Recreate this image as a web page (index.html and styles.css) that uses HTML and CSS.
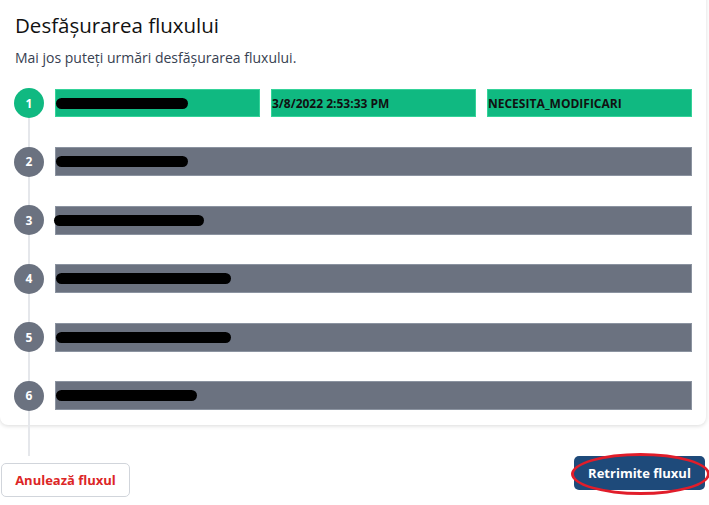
FILE: index.html
```html
<!DOCTYPE html>
<html>

<head>
    <title>Desfășurarea fluxului</title>
    <meta charset="utf-8">
    <meta name="viewport" content="width=device-width, initial-scale=1.0">

    <link rel="stylesheet" href="styles.css">
</head>

<body>

    <section class="card">
        <h1>Desfășurarea fluxului</h1>
        <p class="intro">Mai jos puteți urmări desfășurarea fluxului.</p>

        <ol class="pasi">
            <li class="pas activ">
                <span class="cerc">1</span>
                <div class="celule">
                    <div class="celula"><span class="ascuns lat1"></span></div>
                    <div class="celula">3/8/2022 2:53:33 PM</div>
                    <div class="celula">NECESITA_MODIFICARI</div>
                </div>
            </li>
            <li class="pas">
                <span class="cerc">2</span>
                <div class="bara"><span class="ascuns lat1"></span></div>
            </li>
            <li class="pas">
                <span class="cerc">3</span>
                <div class="bara"><span class="ascuns lat3"></span></div>
            </li>
            <li class="pas">
                <span class="cerc">4</span>
                <div class="bara"><span class="ascuns lat4"></span></div>
            </li>
            <li class="pas">
                <span class="cerc">5</span>
                <div class="bara"><span class="ascuns lat4"></span></div>
            </li>
            <li class="pas ultim">
                <span class="cerc">6</span>
                <div class="bara"><span class="ascuns lat6"></span></div>
            </li>
        </ol>
    </section>

    <div class="actiuni">
        <button class="btn anuleaza">Anulează fluxul</button>
        <button class="btn retrimite">Retrimite fluxul<span class="marcaj"></span></button>
    </div>

</body>

</html>
```

FILE: styles.css
```css
body {
    margin: 0;
    background-color: #fff;
    font-family: "Open Sans", sans-serif;
    color: #111827;
}

.card {
    width: 706px;
    box-sizing: border-box;
    margin-top: -10px;
    padding: 10px 14px 14px 14px;
    background-color: #fff;
    border-radius: 8px;
    box-shadow: 0 1px 4px rgba(0, 0, 0, 0.15);
}

h1 {
    margin: 10px 0 0 1px;
    font-size: 20.5px;
    font-weight: 400;
    line-height: 30px;
    color: #111;
}

.intro {
    margin: 8px 0 0 1px;
    font-size: 14px;
    line-height: 19px;
    color: #374151;
}

.pasi {
    list-style: none;
    margin: 21px 0 0 0;
    padding: 0;
    display: flex;
    flex-direction: column;
    gap: 28.6px;
}

.pas {
    display: flex;
    align-items: center;
    gap: 11px;
    height: 30px;
    position: relative;
}

.cerc {
    width: 30px;
    height: 30px;
    flex: none;
    border-radius: 50%;
    background-color: #6b7280;
    color: #fff;
    font-size: 12px;
    font-weight: 700;
    display: flex;
    align-items: center;
    justify-content: center;
    position: relative;
    z-index: 2;
}

.activ .cerc {
    background-color: #10b981;
}

/* linia dintre cercuri */
.pas::after {
    content: "";
    position: absolute;
    left: 14px;
    top: 30px;
    width: 2px;
    height: 29px;
    background-color: #e5e7eb;
    z-index: 2;
}

.ultim::after {
    height: 45px;
}

.celule {
    flex: 1;
    display: grid;
    grid-template-columns: repeat(3, 1fr);
    gap: 11px;
}

.celula {
    height: 28px;
    background-color: #10b981;
    border: 1px solid #34d399;
    box-sizing: border-box;
    font-size: 12px;
    font-weight: 700;
    color: #111;
    display: flex;
    align-items: center;
}

.bara {
    flex: 1;
    height: 29px;
    background-color: #6b7280;
    border: 1px solid #8b93a0;
    box-sizing: border-box;
    display: flex;
    align-items: center;
}

.ascuns {
    height: 11px;
    border-radius: 6px;
    background-color: #000;
}

.lat1 {
    width: 132px;
}

.lat3 {
    width: 150px;
    margin-left: -2px;
}

.lat4 {
    width: 175px;
}

.lat6 {
    width: 141px;
}

.actiuni {
    display: flex;
    justify-content: space-between;
    align-items: flex-start;
    width: 706px;
    margin-top: 31px;
}

.btn {
    height: 34px;
    border-radius: 5px;
    font-family: "Open Sans", sans-serif;
    font-size: 13px;
    font-weight: 700;
    cursor: pointer;
}

.anuleaza {
    margin: 7px 0 0 1px;
    width: 129px;
    background-color: #fff;
    border: 1px solid #d1d5db;
    color: #dc2626;
}

.retrimite {
    width: 131px;
    margin-right: 1px;
    background-color: #1e4a7a;
    border: none;
    color: #fff;
    position: relative;
}

.marcaj {
    position: absolute;
    left: -3px;
    top: -3px;
    width: 133px;
    height: 36px;
    border: 3px solid #e11d2a;
    border-radius: 50%;
}
```
